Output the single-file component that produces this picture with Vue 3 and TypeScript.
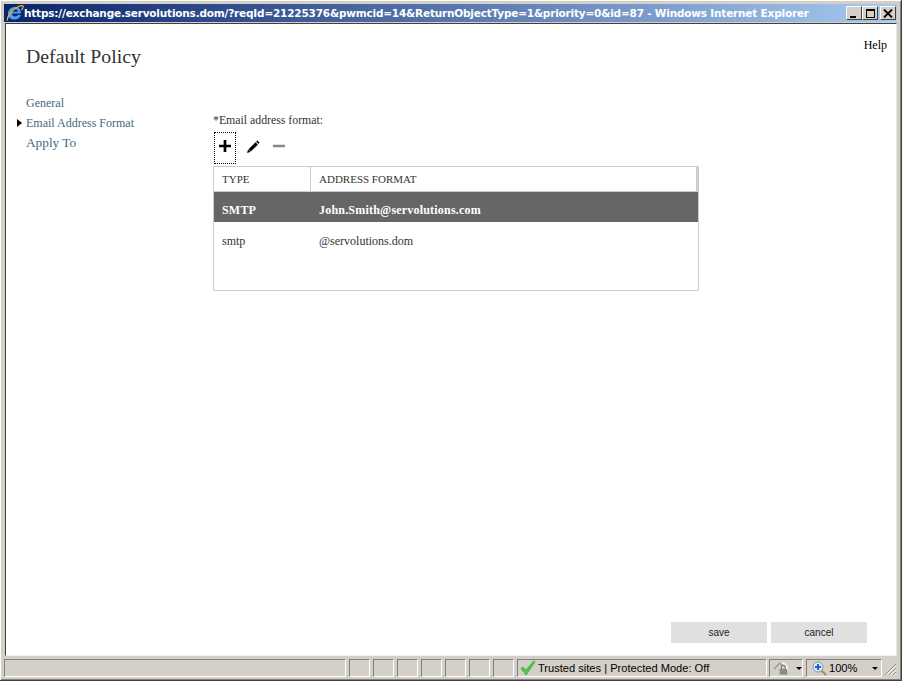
<script setup lang="ts">
const navItems = [
  { label: 'General', active: false, large: false },
  { label: 'Email Address Format', active: true, large: false },
  { label: 'Apply To', active: false, large: true },
]
const rows = [
  { type: 'SMTP', format: 'John.Smith@servolutions.com', selected: true },
  { type: 'smtp', format: '@servolutions.dom', selected: false },
]
const panes = [0, 1, 2, 3, 4, 5, 6]
</script>

<template>
  <div class="window">
    <div class="titlebar">
      <svg class="ie" width="18" height="18" viewBox="0 0 18 18">
        <path d="M2 9.500C2 5.500 5.300 3 9 3c3.800 0 6 2.600 6 6.500H6c.2 2 1.500 3 3.200 3 1.300 0 2.300-.5 2.900-1.400h2.700C14 13.800 12 15.500 9 15.500 5 15.500 2 13.500 2 9.500zM6.100 7.700h5.800C11.700 6 10.600 5 9 5S6.400 6 6.100 7.700z" fill="#4aa3ea" fill-rule="evenodd"/>
        <path d="M1.500 16.500C.5 14 5 7 10 4c3-1.800 6-3 7-2 .6.700-.2 2.300-1.500 4" fill="none" stroke="#f0b030" stroke-width="1.300"/>
      </svg>
      <span class="title">https://exchange.servolutions.dom/?reqId=21225376&amp;pwmcid=14&amp;ReturnObjectType=1&amp;priority=0&amp;id=87 - Windows Internet Explorer</span>
      <div class="winbtns">
        <div class="winbtn"><i class="min"></i></div>
        <div class="winbtn"><i class="max"></i></div>
        <div class="winbtn close">
          <svg width="10" height="9" viewBox="0 0 10 9"><path d="M1 0.500L9 8.500M9 0.500L1 8.500" stroke="#000" stroke-width="1.800" fill="none"/></svg>
        </div>
      </div>
    </div>

    <div class="client">
      <div class="help">Help</div>
      <h1 class="heading">Default Policy</h1>
      <div class="body">
        <nav class="nav">
          <div v-for="item in navItems" :key="item.label" class="nav-item" :class="{ active: item.active, large: item.large }">{{ item.label }}</div>
        </nav>
        <section class="main">
          <div class="label">*Email address format:</div>
          <div class="toolbar">
            <div class="tool focus">
              <svg width="12" height="12" viewBox="0 0 12 12"><path d="M6 0v12M0 6h12" stroke="#000" stroke-width="2.700" fill="none"/></svg>
            </div>
            <div class="tool">
              <svg width="13" height="13" viewBox="0 0 13 13"><path d="M3.800 11.300L1.700 9.200 8.500 2.500l2.200 2.200zM1.300 9.800L.3 12.700 3.200 11.700zM9.300 1.700l1-1 2 2-1 1z" fill="#000" stroke="#000" stroke-width=".4"/></svg>
            </div>
            <div class="tool">
              <svg width="12" height="12" viewBox="0 0 12 12"><path d="M0 6h12" stroke="#888" stroke-width="2.500" fill="none"/></svg>
            </div>
          </div>
          <div class="grid">
            <div class="grid-head">
              <div class="col-type head-type">TYPE</div>
              <div class="col-format">ADDRESS FORMAT</div>
            </div>
            <div v-for="row in rows" :key="row.type" class="grid-row" :class="{ selected: row.selected }">
              <div class="col-type">{{ row.type }}</div>
              <div class="col-format">{{ row.format }}</div>
            </div>
          </div>
        </section>
      </div>
      <div class="actions">
        <div class="btn">save</div>
        <div class="btn">cancel</div>
      </div>
    </div>

    <div class="statusbar">
      <div class="pane first"></div>
      <div v-for="p in panes" :key="p" class="pane small"></div>
      <div class="pane zone">
        <svg width="16" height="16" viewBox="0 0 17 17"><path d="M1 9l2.500-1.500L6 11 14.500 1 16 2 6.500 16z" fill="#4fc94f" stroke="#2f9a35" stroke-width=".6"/></svg>
        <span>Trusted sites | Protected Mode: Off</span>
      </div>
      <div class="pane lock">
        <svg width="18" height="16" viewBox="0 0 18 16">
          <path d="M1 9l6-6 3 3" fill="none" stroke="#9a9a9a" stroke-width="1.500"/>
          <path d="M10 3a6 6 0 0 1 4 9" fill="none" stroke="#fff" stroke-width="2"/>
          <rect x="7" y="9" width="8" height="6" fill="#8a8a8a"/>
          <path d="M9 9V7a2 2 0 0 1 4 0v2" fill="none" stroke="#777" stroke-width="1.200"/>
        </svg>
        <i class="caret"></i>
      </div>
      <div class="pane zoom">
        <svg width="15" height="15" viewBox="0 0 15 15">
          <circle cx="6" cy="6" r="5" fill="#dfeaf8" stroke="#7d97b8"/>
          <path d="M6 3v6M3 6h6" stroke="#1f5fc0" stroke-width="2"/>
          <path d="M9.500 9.500L14 14" stroke="#b08a50" stroke-width="2"/>
        </svg>
        <span>100%</span>
        <i class="caret right"></i>
      </div>
      <svg class="grip" width="13" height="13" viewBox="0 0 13 13">
        <path d="M12 1L1 12M12 5L5 12M12 9L9 12" stroke="#8f8c85" stroke-width="1" fill="none"/>
        <path d="M12 2.500L2.500 12M12 6.500L6.500 12M12 10.500L10.500 12" stroke="#fff" stroke-width="1" fill="none"/>
      </svg>
    </div>
  </div>
</template>

<style>
html, body { margin: 0; padding: 0; overflow: hidden; }
</style>

<style scoped>
.window {
  width: 902px;
  height: 681px;
  box-sizing: border-box;
  background: #d4d0c8;
  display: flex;
  flex-direction: column;
  padding: 4px 4px 2px;
  border-right: 1px solid #404040;
  border-bottom: 1px solid #404040;
  box-shadow: inset 1px 1px 0 #fff, inset -1px -1px 0 #808080;
  overflow: hidden;
}
.titlebar {
  height: 18px;
  flex: none;
  background: linear-gradient(90deg, #0a246a, #a6caf0);
  display: flex;
  align-items: center;
  padding-left: 2px;
  color: #fff;
  font: bold 10.500px "DejaVu Sans", sans-serif;
  letter-spacing: -0.19px;
  white-space: nowrap;
}
.ie { flex: none; }
.title { flex: 1; min-width: 0; }
.winbtns { display: flex; flex: none; margin-right: 1px; }
.winbtn {
  width: 16px;
  height: 14px;
  box-sizing: border-box;
  background: #d4d0c8;
  border: 1px solid;
  border-color: #fff #404040 #404040 #fff;
  display: flex;
  align-items: center;
  justify-content: center;
}
.winbtn.close { margin-left: 2px; }
.min { width: 6px; height: 2px; background: #000; margin-top: 7px; margin-right: 3px; }
.max { width: 9px; height: 9px; box-sizing: border-box; border: 1px solid #000; border-top-width: 2px; }
.client {
  flex: none;
  box-sizing: border-box;
  height: 633px;
  margin: 1px 0 0 1px;
  background: #fff;
  border-left: 1px solid #404040;
  border-top: 1px solid #404040;
  border-right: 1px solid #e8e6e0;
  border-bottom: 1px solid #f2f1ed;
  display: flex;
  flex-direction: column;
  position: relative;
  font-family: "Liberation Serif", serif;
  font-size: 12px;
  color: #333;
}
.help {
  position: absolute;
  top: 14px;
  right: 9px;
  color: #000;
}
.heading {
  margin: 20px 0 0 20px;
  font-size: 19.800px;
  font-weight: 400;
  line-height: 24px;
  color: #333;
}
.body { display: flex; margin-top: 25px; flex: 1; }
.nav { width: 187px; padding-left: 20px; flex: none; }
.nav-item {
  height: 20px;
  line-height: 20px;
  color: #456a7c;
  position: relative;
}
.nav-item.large { font-size: 13.300px; }
.nav-item.active::before {
  content: "";
  position: absolute;
  left: -9px;
  top: 6px;
  border-left: 5px solid #000;
  border-top: 4px solid transparent;
  border-bottom: 4px solid transparent;
}
.main { padding-top: 19px; flex: 1; }
.label { line-height: 16px; color: #333; font-size: 11.800px; }
.toolbar { display: flex; margin-top: 4px; height: 34px; align-items: flex-start; }
.tool {
  width: 22px;
  height: 28px;
  box-sizing: border-box;
  display: flex;
  align-items: center;
  justify-content: center;
  margin-right: 4px;
}
.tool.focus {
  outline: 1px dotted #000;
  outline-offset: -1px;
  height: 32px;
  padding-bottom: 4px;
  margin: 0 6px 0 1px;
}
.grid {
  width: 486px;
  height: 125px;
  box-sizing: border-box;
  border: 1px solid #c8ced3;
  color: #333;
}
.grid-head {
  display: flex;
  height: 25px;
  line-height: 24px;
  border-right: 2px solid #c8ced3;
  border-bottom: 1px solid #c8ced3;
  box-sizing: border-box;
  font-size: 11px;
}
.col-type { width: 97px; box-sizing: border-box; padding-left: 8px; flex: none; }
.col-format { padding-left: 8px; }
.head-type { width: 97px; border-right: 1px solid #c8ced3; }
.grid-row { display: flex; height: 30px; line-height: 37px; }
.grid-row.selected { background: #666; color: #fff; font-weight: 700; letter-spacing: 0.2px; }
.grid-row:not(.selected) { line-height: 38px; }
.actions {
  position: absolute;
  right: 29px;
  bottom: 12px;
  display: flex;
  gap: 4px;
}
.btn {
  width: 96px;
  height: 21px;
  text-align: center;
  background: #e0e0e0;
  font: 10px/21px "Liberation Sans", sans-serif;
  color: #222;
}
.statusbar {
  flex: none;
  height: 18px;
  margin-top: 3px;
  display: flex;
  font: 11.100px "Liberation Sans", sans-serif;
  color: #000;
  position: relative;
}
.pane {
  box-sizing: border-box;
  height: 18px;
  border: 1px solid;
  border-color: #808080 #fff #fff #808080;
  margin-right: 3px;
  flex: none;
}
.first { width: 342px; }
.small { width: 21px; }
.zone { width: 250px; margin-right: 2px; display: flex; align-items: center; gap: 2px; padding-left: 2px; white-space: nowrap; }
.lock { width: 34px; display: flex; align-items: center; gap: 6px; padding-left: 3px; }
.zoom { width: 76px; display: flex; align-items: center; gap: 2px; padding-left: 5px; margin-right: 0; }
.caret {
  display: block;
  border-top: 3px solid #000;
  border-left: 3px solid transparent;
  border-right: 3px solid transparent;
  width: 0;
  height: 0;
}
.caret.right { margin-left: 13px; }
.grip { position: absolute; right: 0; bottom: 1px; }
</style>
